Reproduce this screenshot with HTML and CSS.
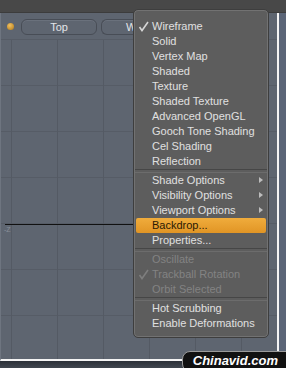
FILE: index.html
```html
<!DOCTYPE html>
<html lang="en">
<head>
  <meta charset="UTF-8" />
  <title>Viewport Menu</title>
  <link rel="stylesheet" href="styles.css">
</head>
<body>
  <div class="screen">
    <div class="topbar"></div>

    <div class="middle">
      <div class="viewport">
        <div class="toolbar">
          <span class="dot"></span>
          <span class="vp-btn">Top</span>
          <span class="vp-btn cut">Wireframe</span>
        </div>
        <div class="axis"></div>
        <span class="axis-label">-Z</span>
      </div>
      <div class="side"></div>
    </div>

    <div class="bottom"></div>

    <!-- popup menu -->
    <ul class="menu">
      <li><svg class="check" width="11" height="11" viewBox="0 0 11 11"><path d="M1.5 6 L4 9.5 L10 1" fill="none" stroke="#d6d6d6" stroke-width="1.6"/></svg>Wireframe</li>
      <li>Solid</li>
      <li>Vertex Map</li>
      <li>Shaded</li>
      <li>Texture</li>
      <li>Shaded Texture</li>
      <li>Advanced OpenGL</li>
      <li>Gooch Tone Shading</li>
      <li>Cel Shading</li>
      <li>Reflection</li>
      <li class="sep"></li>
      <li class="sub">Shade Options</li>
      <li class="sub">Visibility Options</li>
      <li class="sub">Viewport Options</li>
      <li class="active">Backdrop...</li>
      <li>Properties...</li>
      <li class="sep"></li>
      <li class="disabled">Oscillate</li>
      <li class="disabled"><svg class="check" width="11" height="11" viewBox="0 0 11 11"><path d="M1.5 6 L4 9.5 L10 1" fill="none" stroke="#7e7e7e" stroke-width="1.6"/></svg>Trackball Rotation</li>
      <li class="disabled">Orbit Selected</li>
      <li class="sep"></li>
      <li>Hot Scrubbing</li>
      <li>Enable Deformations</li>
    </ul>

    <div class="watermark">Chinavid.com</div>
  </div>
</body>
</html>
```

FILE: styles.css
```css
* {
  margin: 0;
  padding: 0;
  box-sizing: border-box;
}

body {
  font-family: 'Liberation Sans', Arial, sans-serif;
  background: #3a3f47;
}

.screen {
  position: relative;
  width: 286px;
  height: 368px;
  overflow: hidden;
  background: #3a3f47;
  display: flex;
  flex-direction: column;
}

.topbar {
  height: 13px;
  background: #484848;
  border-bottom: 1px solid #3c3c3c;
}

.middle {
  display: flex;
  height: 348px;
}

.viewport {
  position: relative;
  width: 279px;
  border-right: 2px solid #f4f4f4;
  border-bottom: 2px solid #f4f4f4;
  border-left: 1px solid #6e7580;
  background-color: #5e6570;
  background-image:
    linear-gradient(to right, transparent 10px, #545a64 10px, #545a64 11px, transparent 11px),
    linear-gradient(to right, transparent 56px, #565c66 56px, #565c66 57px, transparent 57px),
    linear-gradient(to bottom, transparent 26px, #565c66 26px, #565c66 27px, transparent 27px);
  background-size: 46px 100%, 46px 100%, 100% 46px;
  background-position: 0 0, 0 0, 0 0;
}

.side {
  flex: 1;
  background: #5b6577;
}

.bottom {
  flex: 1;
  background: linear-gradient(#2b3038, #40464f);
}

.toolbar {
  height: 27px;
  display: flex;
  align-items: center;
  gap: 4px;
  padding-left: 6px;
  padding-top: 1px;
  background: #5e6570;
  border-bottom: 1px solid #565c66;
}

.dot {
  width: 7px;
  height: 7px;
  border-radius: 50%;
  background: radial-gradient(circle at 40% 35%, #f0c060, #b07818);
  margin-right: 3px;
}

.vp-btn {
  flex: none;
  width: 76px;
  height: 16px;
  border: 1px solid #484d56;
  border-radius: 6px;
  color: #e2e4e8;
  font-size: 11px;
  line-height: 14px;
  text-align: center;
  box-shadow: inset 0 1px 0 #6a717c;
}

/* second button runs under the menu, only its first letter shows */
.vp-btn.cut {
  width: 36px;
  text-align: left;
  padding-left: 24px;
  overflow: hidden;
  white-space: nowrap;
  border-right: none;
  border-radius: 6px 0 0 6px;
}

.axis {
  position: absolute;
  left: 4px;
  top: 211px;
  width: 140px;
  height: 1px;
  background: #111;
}

.axis-label {
  position: absolute;
  left: 3px;
  top: 213px;
  font-size: 7px;
  color: #8a909a;
}

.menu {
  position: absolute;
  left: 133px;
  top: 9px;
  width: 136px;
  height: 329px;
  list-style: none;
  background: #5d5d5d;
  border: 1px solid #3e3e3e;
  border-radius: 5px;
  box-shadow: inset 0 0 0 1px #727272;
  padding: 9px 2px 7px 2px;
}

.menu li {
  position: relative;
  height: 15px;
  line-height: 15px;
  font-size: 11px;
  color: #e0e0e0;
  padding-left: 16px;
  white-space: nowrap;
}

.menu .check {
  position: absolute;
  left: 2px;
  top: 2px;
}

.menu li.sep {
  height: 4px;
  margin: 0 -1px;
  border-top: 1px solid #464646;
  border-bottom: 1px solid #6c6c6c;
  background: #5d5d5d;
}

.menu li.disabled {
  color: #838383;
}

.menu li.sub::after {
  content: "";
  position: absolute;
  right: 3px;
  top: 4px;
  border-left: 4px solid #bdbdbd;
  border-top: 3.5px solid transparent;
  border-bottom: 3.5px solid transparent;
}

.menu li.active {
  background: linear-gradient(#f0ac3c, #e19525);
  border-radius: 2px;
  color: #2a1a05;
}

.watermark {
  position: absolute;
  right: -8px;
  bottom: -4px;
  padding: 1px 15px 3px 10px;
  background: #111;
  border: 1px solid #9a9a9a;
  border-radius: 8px;
  color: #fff;
  font-size: 13px;
  font-weight: bold;
  font-style: italic;
}
```
